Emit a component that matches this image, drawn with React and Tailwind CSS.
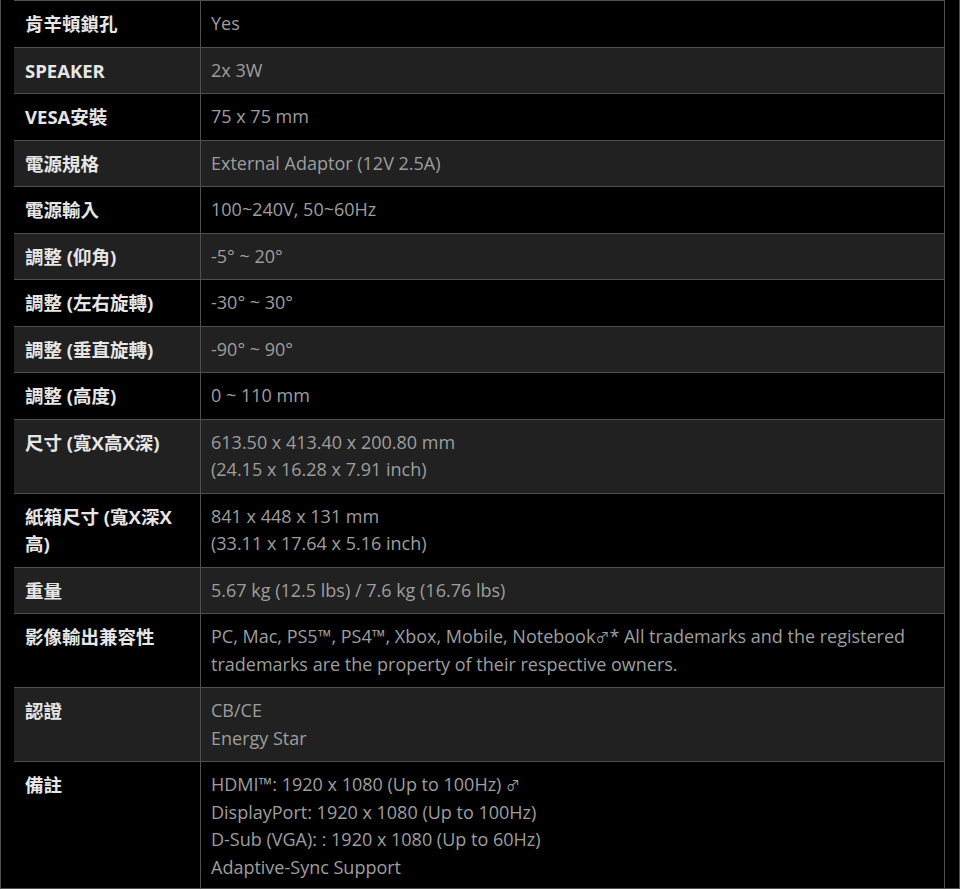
const specs = [
    { label: "肯辛頓鎖孔", value: ["Yes"] },
    { label: "SPEAKER", value: ["2x 3W"] },
    { label: "VESA安裝", value: ["75 x 75 mm"] },
    { label: "電源規格", value: ["External Adaptor (12V 2.5A)"] },
    { label: "電源輸入", value: ["100~240V, 50~60Hz"] },
    { label: "調整 (仰角)", value: ["-5° ~ 20°"] },
    { label: "調整 (左右旋轉)", value: ["-30° ~ 30°"] },
    { label: "調整 (垂直旋轉)", value: ["-90° ~ 90°"] },
    { label: "調整 (高度)", value: ["0 ~ 110 mm"] },
    { label: "尺寸 (寬X高X深)", value: ["613.50 x 413.40 x 200.80 mm", "(24.15 x 16.28 x 7.91 inch)"] },
    { label: "紙箱尺寸 (寬X深X高)", value: ["841 x 448 x 131 mm", "(33.11 x 17.64 x 5.16 inch)"] },
    { label: "重量", value: ["5.67 kg (12.5 lbs) / 7.6 kg (16.76 lbs)"] },
    {
        label: "影像輸出兼容性",
        value: [
            <span key="v">
                PC, Mac, PS5™, PS4™, Xbox, Mobile, Notebook<Mark />* All trademarks and the registered trademarks are the
                property of their respective owners.
            </span>,
        ],
    },
    { label: "認證", value: ["CB/CE", "Energy Star"] },
    {
        label: "備註",
        value: [
            <span key="h">
                HDMI™: 1920 x 1080 (Up to 100Hz) <Mark />
            </span>,
            "DisplayPort: 1920 x 1080 (Up to 100Hz)",
            "D-Sub (VGA): : 1920 x 1080 (Up to 60Hz)",
            "Adaptive-Sync Support",
        ],
    },
];

function Mark() {
    return <span className="text-[14px] align-top">♂</span>;
}

const App = () => {
    return (
        <div
            className="w-[960px] h-[889px] overflow-hidden bg-black border-x border-b border-[#4f4f4f] pl-[13px] pr-[14px]"
            style={{ fontFamily: '"Open Sans", "Noto Sans CJK TC", sans-serif' }}
        >
            <div className="border-t border-[#4f4f4f]">
                {specs.map((row, i) => (
                    <div
                        key={row.label}
                        className={`flex border-b border-r border-[#4f4f4f] ${i % 2 === 1 ? "bg-[#212121]" : "bg-black"}`}
                    >
                        <div className="w-[186px] shrink-0 pl-[11px] pr-[8px] py-[9px] text-[18.5px] leading-[27.5px] font-bold text-[#e6e6e6]">
                            {row.label}
                        </div>
                        <div className="flex-1 border-l border-[#4f4f4f] pl-[10px] pr-[12px] py-[9px] text-[18px] leading-[27.5px] text-[#9e9e9e]">
                            {row.value.map((v, j) => (
                                <div key={j}>{v}</div>
                            ))}
                        </div>
                    </div>
                ))}
            </div>
        </div>
    );
};

export default App;
